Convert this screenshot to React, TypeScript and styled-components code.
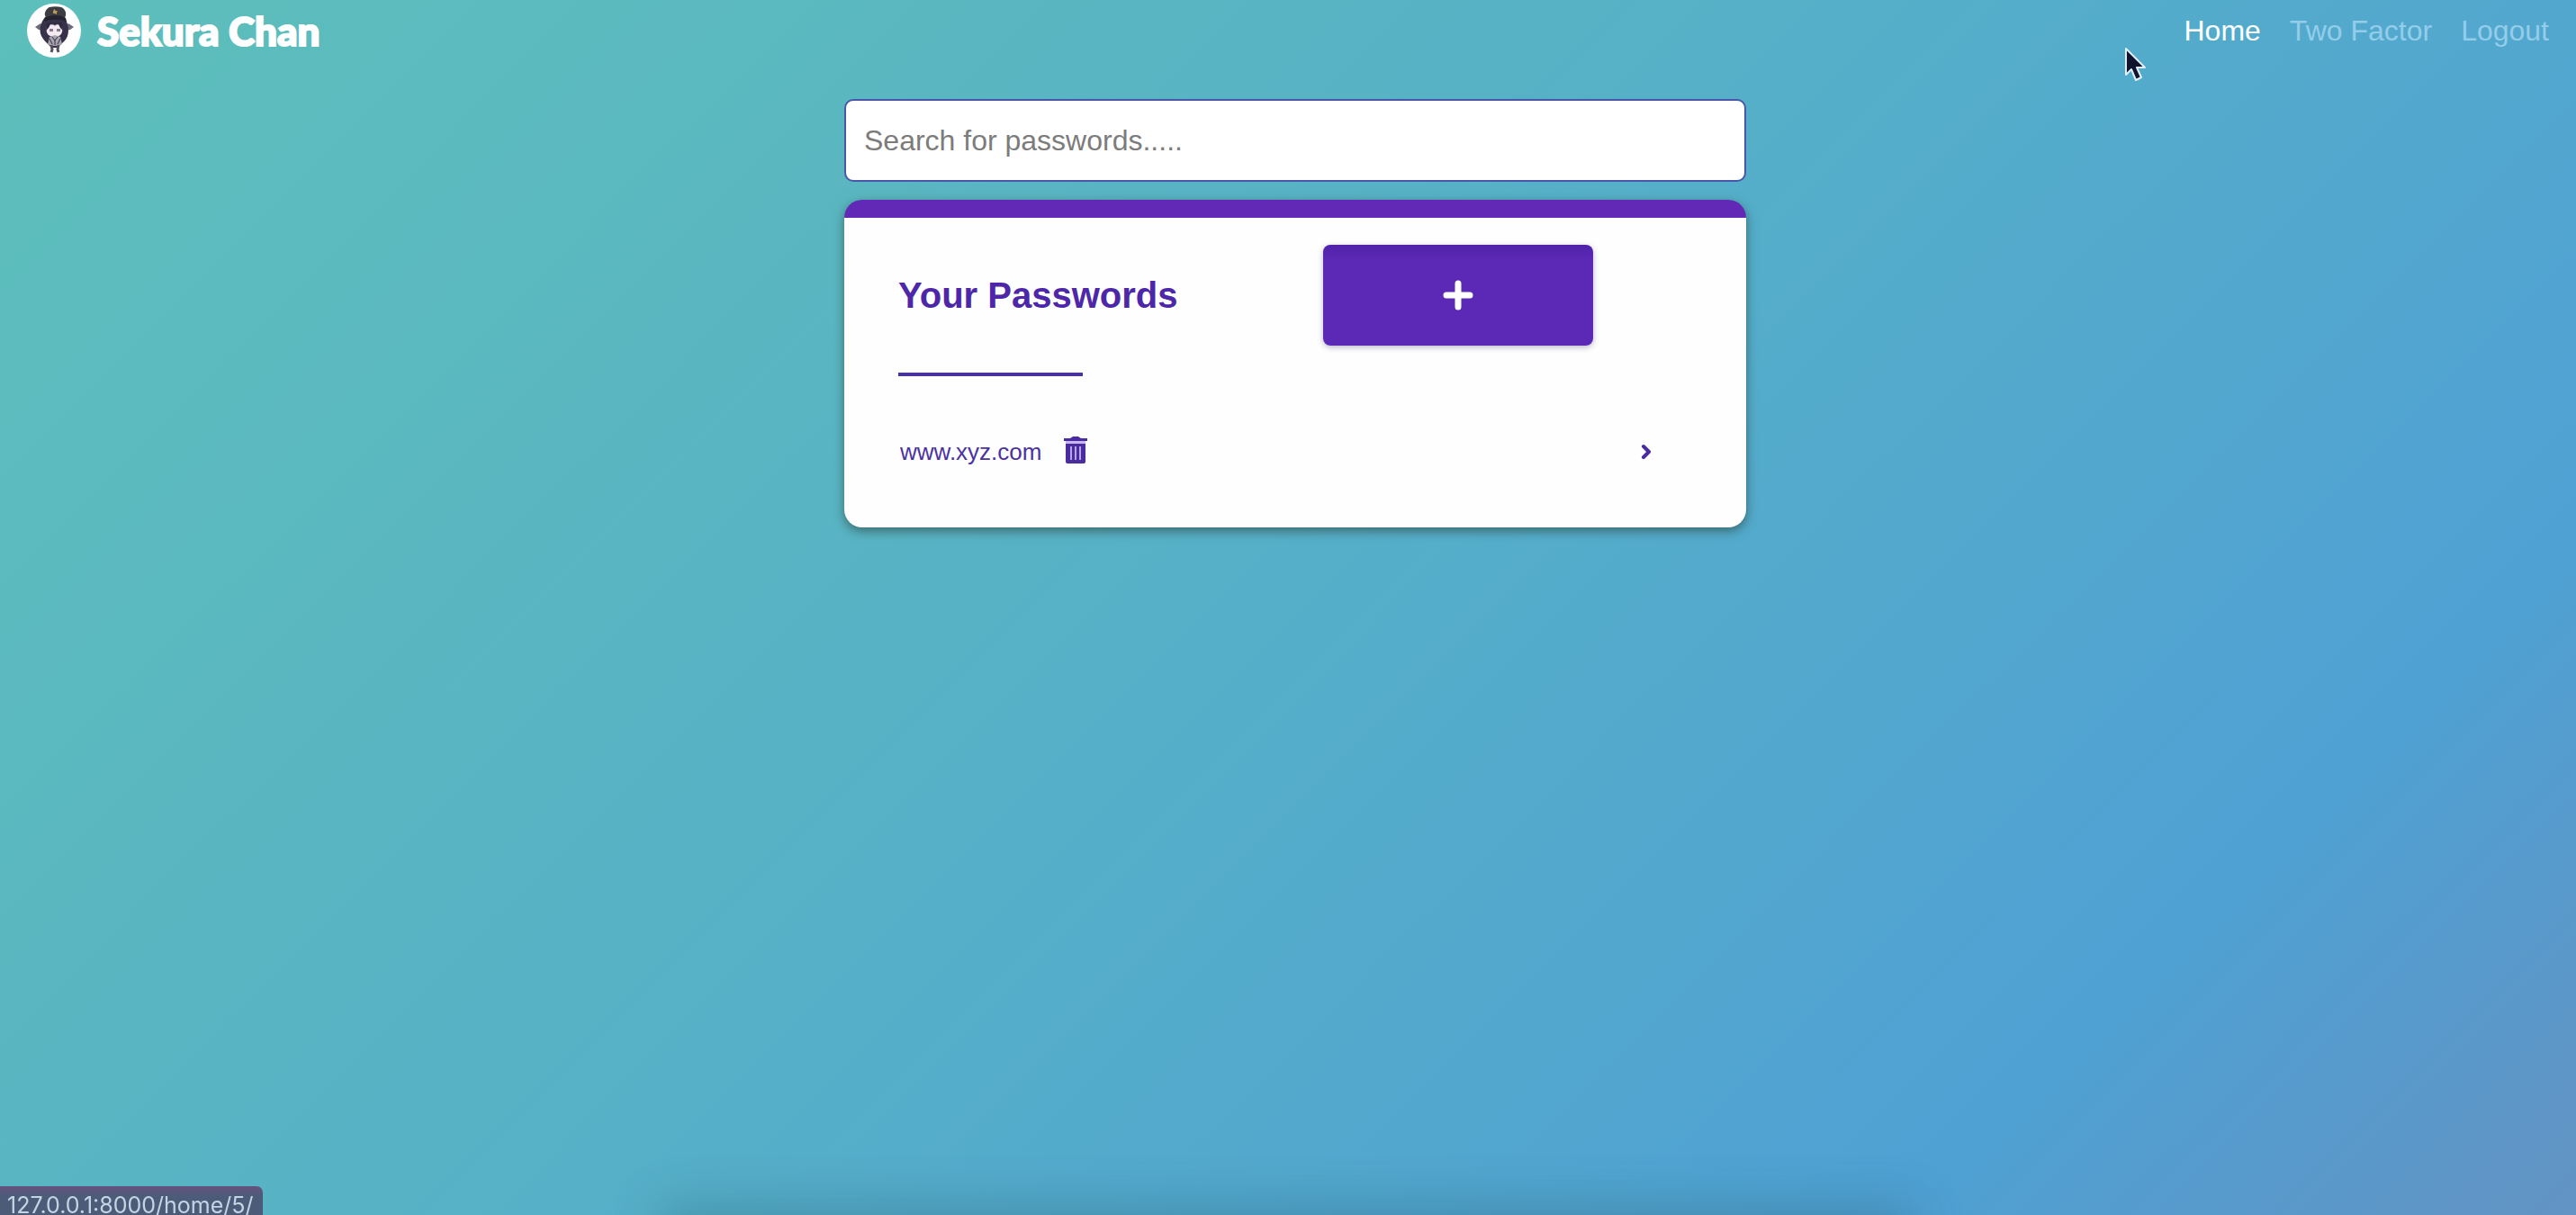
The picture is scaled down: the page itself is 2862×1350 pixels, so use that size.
import React from "react";
import styled, { createGlobalStyle } from "styled-components";

const GlobalStyle = createGlobalStyle`
  *, *::before, *::after { box-sizing: border-box; }
  html, body { margin: 0; }
  body {
    min-height: 100vh;
    overflow: hidden;
    font-family: "Liberation Sans", Arial, Helvetica, sans-serif;
    background: linear-gradient(135deg, #5dbfbb 0%, #59b5c2 32%, #54adca 54%, #4fa1d3 82%, #6293c4 100%) fixed;
  }
`;

const PURPLE = "#5c28b6";

const Navbar = styled.nav`
  display: flex;
  align-items: center;
  justify-content: space-between;
  padding: 4px 30px;
`;

const Brand = styled.a`
  display: flex;
  align-items: center;
  gap: 18px;
  color: #fff;
  text-decoration: none;
  font-family: Lato, "Liberation Sans", sans-serif;
  font-size: 44px;
  line-height: 60px;
  font-weight: 900;
  -webkit-text-stroke: 2px #fff;
`;

const NavLinks = styled.ul`
  display: flex;
  gap: 32px;
  margin: 0;
  padding: 0;
  list-style: none;
`;

const NavLink = styled.a<{ $active?: boolean }>`
  color: ${(p) => (p.$active ? "#fff" : "#94cdea")};
  font-size: 32px;
  line-height: 40px;
  text-decoration: none;
`;

const Main = styled.main`
  display: flex;
  justify-content: center;
  padding: 42px 0 0 16px;
`;

const Column = styled.div`
  display: flex;
  flex-direction: column;
  gap: 20px;
  width: 100%;
  max-width: 1002px;
`;

const SearchInput = styled.input`
  width: 100%;
  padding: 26px 20px;
  border: 2px solid #4a55ac;
  border-radius: 10px;
  background: #fff;
  color: #333;
  font-family: inherit;
  font-size: 32px;
  line-height: 36px;
  height: 92px;
  outline: none;
  &::placeholder { color: #7c7c7c; opacity: 1; }
`;

const Card = styled.section`
  padding: 30px 60px 64px;
  border-top: 20px solid #6229b7;
  border-radius: 20px;
  background: #fefefe;
  box-shadow: 0 4px 12px rgba(40, 60, 50, 0.6);
`;

const CardHeader = styled.header`
  display: flex;
  align-items: center;
  justify-content: space-between;
  padding-right: 110px;
`;

const Title = styled.h1`
  margin: 0;
  color: #4d27a8;
  font-size: 40px;
  line-height: 46px;
`;

const AddButton = styled.button`
  display: flex;
  align-items: center;
  justify-content: center;
  width: 300px;
  height: 112px;
  border: 0;
  border-radius: 8px;
  background: linear-gradient(#4f22a8, ${PURPLE} 16px);
  box-shadow: 0 2px 6px rgba(40, 20, 90, 0.3);
`;

const Rule = styled.hr`
  width: 205px;
  height: 4px;
  margin: 30px 0 0;
  border: 0;
  background: #49339c;
`;

const List = styled.ul`
  margin: 64px 0 0;
  padding: 0;
  list-style: none;
`;

const Row = styled.li`
  display: flex;
  align-items: center;
  gap: 24px;
  padding: 0 40px 0 2px;
`;

const SiteLink = styled.a`
  color: #4b32a0;
  font-size: 26px;
  line-height: 40px;
  text-decoration: none;
`;

const IconButton = styled.button<{ $end?: boolean }>`
  display: flex;
  padding: 0;
  border: 0;
  background: none;
  color: #4b2ba0;
  margin-left: ${(p) => (p.$end ? "auto" : "0")};
`;

const StatusBubble = styled.div`
  position: fixed;
  left: 0;
  bottom: 0;
  height: 32px;
  padding: 5px 10px 0 8px;
  border-top-right-radius: 7px;
  background: linear-gradient(#64527f, #4c5c78 12px);
  color: #c3d5e4;
  font-family: Inter, "Liberation Sans", sans-serif;
  font-size: 25px;
  line-height: 32px;
  white-space: nowrap;
`;

const DockShade = styled.div`
  position: fixed;
  left: 26%;
  right: 26%;
  bottom: -40px;
  height: 40px;
  box-shadow: 0 0 56px 8px rgba(40, 80, 100, 0.32);
`;

const Pointer = styled.svg`
  position: fixed;
  top: 51px;
  right: 476px;
`;

const Avatar = () => (
  <svg width="60" height="60" viewBox="0 0 60 60" aria-hidden="true">
    <circle cx="30" cy="30" r="30" fill="#fff" />
    <path d="M9 26l6-4 3 3v5l-5-1zM52 26l-6-4-3 3v5l5-1z" fill="#6d6b7a" />
    <path d="M20 15c-5 6-7 15-4 21 3 6 8 9 11 13h7c3-4 9-7 11-13 2-6 1-15-4-21z" fill="#37324a" />
    <path d="M23 22c-2 5-2 10 1 13 3 2 10 2 13 0 3-3 3-8 1-13-4 2-11 2-15 0z" fill="#f3eaf1" />
    <path d="M25 28h4v3h-4zM33 28h4v3h-4z" fill="#8a7a90" />
    <path d="M22 21l5 0-3 6-3 3zM39 21l-5 0 3 6 3 3zM29 21h4l-2 4z" fill="#302b42" />
    <path d="M25 37l6-2 6 2 2 8-4 2h-8l-4-2z" fill="#a5a1ae" />
    <path d="M28 37l3 4 3-4M31 41v5M25 39l3 6M37 39l-3 6" stroke="#35313f" strokeWidth="1" fill="none" />
    <path d="M27 46l1 5-1 3M35 46l-1 5 1 3" fill="none" stroke="#55505c" strokeWidth="3" />
    <path d="M20 13c-1-3 2-8 5-9 4-1 9-1 13 0 3 1 6 5 5 9l-1 3c-6-2-15-2-21 0z" fill="#3c3c42" />
    <path d="M20 16c6-4 17-4 23 0l1 4c-7-3-18-3-25 0z" fill="#25232e" />
    <path d="M30 6l2 2 2 0-1 2 0 2-2-1-2 0 0-2z" fill="#b99a50" />
  </svg>
);

const PlusIcon = () => (
  <svg width="34" height="34" viewBox="0 0 34 34" aria-hidden="true">
    <path d="M17 4v26M4 17h26" stroke="#fff" strokeWidth="7" strokeLinecap="round" />
  </svg>
);

const TrashIcon = () => (
  <svg width="28" height="34" viewBox="0 0 28 34" aria-hidden="true">
    <path d="M8 2l3-2h6l3 2h7v3H1V2z" fill="currentColor" />
    <path d="M3 5h22v3H3z" fill="#c9b8ec" />
    <path d="M3 8h22v20a2 2 0 0 1-2 2H5a2 2 0 0 1-2-2z" fill="currentColor" />
    <path d="M9 11v15M14 11v15M19 11v15" stroke="#b8a5e4" strokeWidth="2" />
  </svg>
);

const ChevronIcon = () => (
  <svg width="20" height="20" viewBox="0 0 20 20" aria-hidden="true">
    <path d="M6 4l6 6-6 6" fill="none" stroke="currentColor" strokeWidth="4" strokeLinecap="round" strokeLinejoin="round" />
  </svg>
);

const sites = ["www.xyz.com"];

export default function App() {
  return (
    <>
      <GlobalStyle />
      <Navbar>
        <Brand href="#home">
          <Avatar />
          Sekura Chan
        </Brand>
        <NavLinks>
          <li><NavLink href="#home" $active>Home</NavLink></li>
          <li><NavLink href="#two-factor">Two Factor</NavLink></li>
          <li><NavLink href="#logout">Logout</NavLink></li>
        </NavLinks>
      </Navbar>
      <Main>
        <Column>
          <SearchInput type="text" aria-label="Search for passwords" placeholder="Search for passwords....." />
          <Card>
            <CardHeader>
              <Title>Your Passwords</Title>
              <AddButton type="button" aria-label="Add password"><PlusIcon /></AddButton>
            </CardHeader>
            <Rule />
            <List>
              {sites.map((site) => (
                <Row key={site}>
                  <SiteLink href="#site">{site}</SiteLink>
                  <IconButton type="button" aria-label={`Delete ${site}`}><TrashIcon /></IconButton>
                  <IconButton type="button" aria-label={`Open ${site}`} $end><ChevronIcon /></IconButton>
                </Row>
              ))}
            </List>
          </Card>
        </Column>
      </Main>
      <DockShade />
      <StatusBubble>127.0.0.1:8000/home/5/</StatusBubble>
      <Pointer width="26" height="42" viewBox="0 0 26 42" aria-hidden="true">
        <path d="M2 3v29l6-6 5 12 6-3-5-11h9z" fill="#10142c" stroke="#e4eefa" strokeWidth="2" strokeLinejoin="round" />
      </Pointer>
    </>
  );
}
